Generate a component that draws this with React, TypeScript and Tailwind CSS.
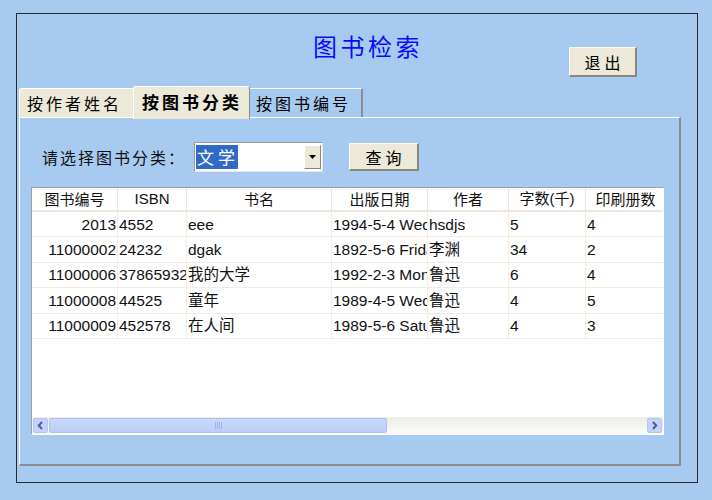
import React from 'react';

const CJK = '"Noto Sans CJK SC", "Liberation Sans", sans-serif';
const LATIN = '"Liberation Sans", "Noto Sans CJK SC", sans-serif';

type Row = { id: string; isbn: string; name: string; date: string; author: string; words: string; prints: string };

const COLS = [
  { key: 'id', label: '图书编号', w: 'w-[86px]' },
  { key: 'isbn', label: 'ISBN', w: 'w-[69px]' },
  { key: 'name', label: '书名', w: 'w-[145px]' },
  { key: 'date', label: '出版日期', w: 'w-[96px]' },
  { key: 'author', label: '作者', w: 'w-[81px]' },
  { key: 'words', label: '字数(千)', w: 'w-[77px]' },
  { key: 'prints', label: '印刷册数', w: 'w-[80px]' },
] as const;

const ROWS: Row[] = [
  { id: '2013', isbn: '4552', name: 'eee', date: '1994-5-4 Wednesday', author: 'hsdjs', words: '5', prints: '4' },
  { id: '11000002', isbn: '24232', name: 'dgak', date: '1892-5-6 Friday', author: '李渊', words: '34', prints: '2' },
  { id: '11000006', isbn: '37865932', name: '我的大学', date: '1992-2-3 Monday', author: '鲁迅', words: '6', prints: '4' },
  { id: '11000008', isbn: '44525', name: '童年', date: '1989-4-5 Wednesday', author: '鲁迅', words: '4', prints: '5' },
  { id: '11000009', isbn: '452578', name: '在人间', date: '1989-5-6 Saturday', author: '鲁迅', words: '4', prints: '3' },
];

function XpButton({ label, className }: { label: string; className: string }) {
  return (
    <button
      type="button"
      className={`flex items-center justify-center bg-[#ece9d8] border-t border-l border-white border-r-2 border-b-2 border-r-[#8a887e] border-b-[#8a887e] text-[16px] tracking-[4px] pl-[4px] text-black ${className}`}
      style={{ fontFamily: CJK }}
    >
      {label}
    </button>
  );
}

function Chevron({ dir }: { dir: 'left' | 'right' }) {
  return (
    <div className="w-[15px] h-[15px] flex items-center justify-center rounded-[2px] bg-[#c4d3fb] border border-[#b4c6f2]">
      <svg width="7" height="9" viewBox="0 0 7 9">
        <path
          d={dir === 'left' ? 'M5 1 L1.8 4.5 L5 8' : 'M2 1 L5.2 4.5 L2 8'}
          stroke="#4d6185"
          strokeWidth="2"
          fill="none"
        />
      </svg>
    </div>
  );
}

export default function App() {
  return (
    <div className="w-[712px] h-[500px] bg-[#a6caf0] pt-[13px] pl-[16px] overflow-hidden">
      <div className="w-[682px] h-[470px] border border-[#2a2a2a] flex flex-col">
        {/* title + exit */}
        <div className="h-[72px] flex items-start">
          <div
            className="ml-[296px] mt-[18px] text-[24px] leading-[28px] tracking-[3.5px] text-[#0a0aff]"
            style={{ fontFamily: CJK }}
          >
            图书检索
          </div>
          <XpButton label="退出" className="ml-[146px] mt-[33px] w-[68px] h-[30px]" />
        </div>

        {/* tabs */}
        <div className="h-[31px] ml-[2px] flex items-end" style={{ fontFamily: CJK }}>
          <div className="w-[114px] h-[29px] bg-[#ece9d8] border-t border-l border-white rounded-tl-[3px] flex items-center pl-[7px] text-[16px] tracking-[3px] text-black">
            按作者姓名
          </div>
          <div className="relative z-10 -mb-[2px] w-[117px] h-[33px] bg-[#ece9d8] border-t border-l border-white border-r border-r-[#8d8d8d] rounded-t-[3px] flex items-center pl-[8px] pb-[2px] text-[17px] font-bold tracking-[3px] text-black">
            按图书分类
          </div>
          <div className="w-[113px] h-[29px] bg-[#a6caf0] border-t border-white border-r-2 border-r-[#8d8d8d] flex items-center pl-[6px] text-[16px] tracking-[3px] text-black">
            按图书编号
          </div>
        </div>

        {/* panel */}
        <div className="ml-[2px] w-[662px] h-[349px] border-t border-l border-white border-r-2 border-b-2 border-r-[#8c8c8c] border-b-[#8c8c8c] flex flex-col">
          <div className="pt-[24px] pl-[22px] flex items-start">
            <div
              className="w-[152px] h-[30px] flex items-center text-[16px] tracking-[2px] text-[#111]"
              style={{ fontFamily: CJK }}
            >
              请选择图书分类：
            </div>
            <div className="w-[129px] h-[30px] bg-white border-t border-l border-[#9a9a9a] border-r border-b border-r-[#e8e8e8] border-b-[#e8e8e8] flex items-center pl-[1px] pr-[1px]">
              <span
                className="w-[42px] h-[24px] bg-[#316ac5] text-white text-[17px] tracking-[4px] pl-[1px] leading-[24px] whitespace-nowrap overflow-hidden"
                style={{ fontFamily: CJK }}
              >
                文学
              </span>
              <div className="ml-auto w-[17px] h-[24px] bg-[#ece9d8] border-t border-l border-white border-r border-b border-r-[#8a887e] border-b-[#8a887e] flex items-center justify-center">
                <svg width="7" height="4" viewBox="0 0 7 4">
                  <path d="M0 0 H7 L3.5 4 Z" fill="#000" />
                </svg>
              </div>
            </div>
            <XpButton label="查询" className="ml-[26px] mt-[1px] w-[70px] h-[28px]" />
          </div>

          {/* list view */}
          <div className="mt-[15px] ml-[11px] w-[633px] h-[248px] border-t border-l border-[#a0a0a0] border-r border-b border-r-white border-b-white bg-white flex flex-col overflow-hidden">
            <div className="flex-1 overflow-hidden">
              <div className="w-[800px]">
                <div className="flex h-[24px] border-b-2 border-[#ebe9dd]" style={{ fontFamily: CJK }}>
                  {COLS.map((c) => (
                    <div
                      key={c.key}
                      className={`${c.w} shrink-0 border-r border-[#ebe9dd] flex items-center justify-center text-[15px] text-[#111] whitespace-nowrap overflow-hidden`}
                      style={c.key === 'isbn' || c.key === 'words' ? { fontFamily: LATIN } : undefined}
                    >
                      {c.label}
                    </div>
                  ))}
                </div>
                {ROWS.map((r) => (
                  <div key={r.id} className="flex h-[25.4px] border-b border-[#efede4]" style={{ fontFamily: LATIN }}>
                    {COLS.map((c) => (
                      <div
                        key={c.key}
                        className={`${c.w} shrink-0 border-r border-[#efede4] flex items-center text-[15.5px] text-[#111] whitespace-nowrap overflow-hidden ${
                          c.key === 'id' ? 'justify-end pr-[1px]' : 'pl-[1px]'
                        }`}
                      >
                        {r[c.key]}
                      </div>
                    ))}
                  </div>
                ))}
              </div>
            </div>

            {/* horizontal scrollbar */}
            <div className="h-[17px] flex items-center bg-gradient-to-b from-[#eeede7] to-[#fbfbf8] pl-[1px] pr-[1px]">
              <Chevron dir="left" />
              <div className="ml-[1px] w-[338px] h-[15px] rounded-[2px] border border-[#b0c3f0] bg-gradient-to-b from-[#cad9fd] to-[#bccdf8] flex items-center justify-center">
                <div className="flex gap-[1px]">
                  {[0, 1, 2, 3].map((i) => (
                    <div key={i} className="w-[1px] h-[7px] bg-[#9fb4e6]" />
                  ))}
                </div>
              </div>
              <div className="flex-1" />
              <Chevron dir="right" />
            </div>
          </div>
        </div>
      </div>
    </div>
  );
}
